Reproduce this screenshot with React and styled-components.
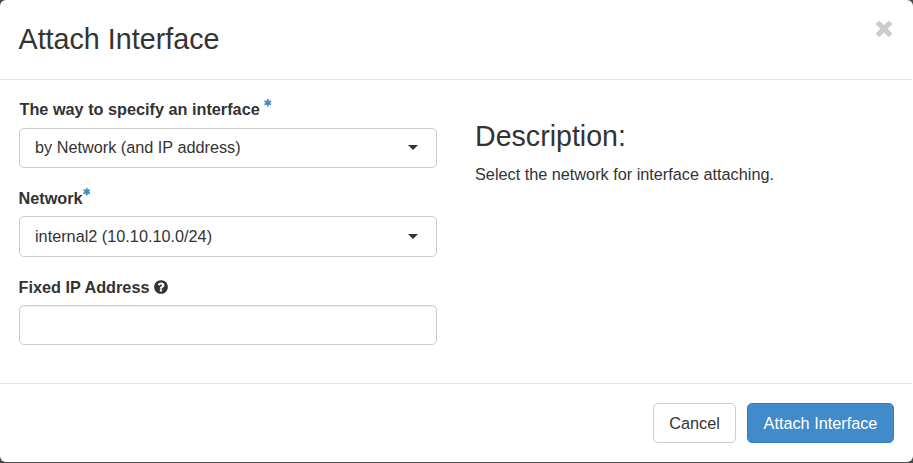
import React from "react";
import styled, { createGlobalStyle } from "styled-components";

const GlobalStyle = createGlobalStyle`
  * { box-sizing: border-box; }
  body {
    margin: 0;
    background: #4a4a4a;
    color: #333;
    font: 16.25px/22px "Liberation Sans", Arial, sans-serif;
    overflow: hidden;
  }
`;

const Backdrop = styled.div`
  height: 463px;
  padding: 0 0 1px;
  background: #4a4a4a;
`;

const Dialog = styled.section`
  display: flex;
  flex-direction: column;
  height: 462px;
  padding-right: 1px;
  background: #fff;
  border-radius: 6px;
`;

const Header = styled.header`
  display: flex;
  justify-content: space-between;
  height: 80px;
  padding: 18px 16px 0 18.5px;
  border-bottom: 1px solid #e5e5e5;
`;

const Title = styled.h3`
  margin: 0;
  font-size: 28.7px;
  font-weight: 400;
  line-height: 42px;
`;

const CloseButton = styled.button`
  width: 24px;
  height: 24px;
  margin-top: -2px;
  padding: 0;
  border: 0;
  background: none;
  color: #ccc;
`;

const Glyph = styled.svg`
  display: block;
  flex: none;
  width: ${(p) => p.$size}px;
  height: ${(p) => p.$size}px;
  fill: currentColor;
`;

const Body = styled.div`
  display: grid;
  grid-template-columns: 418px 1fr;
  column-gap: 38px;
  height: 303px;
  padding: 18px 18px 0 19px;
`;

const Form = styled.form`
  display: flex;
  flex-direction: column;
`;

const Field = styled.div`
  height: ${(p) => p.$height}px;
`;

const Label = styled.label`
  display: flex;
  align-items: center;
  gap: ${(p) => p.$gap || 0}px;
  height: 22px;
  margin: 0 0 ${(p) => p.$space}px ${(p) => p.$shift || 0}px;
  font-weight: 700;
  white-space: nowrap;
`;

const Required = styled.span`
  align-self: flex-start;
  padding-top: ${(p) => p.$drop}px;
  color: #428bca;
`;

const Select = styled.button`
  display: flex;
  align-items: center;
  justify-content: space-between;
  width: 100%;
  height: ${(p) => p.$height}px;
  padding: 0 18px 2px 15px;
  border: 1px solid #ccc;
  border-radius: 5px;
  background: #fff;
  color: #333;
  font: inherit;
  text-align: left;
`;

const Caret = styled.span`
  margin-top: ${(p) => p.$drop || 0}px;
  border: 5px solid transparent;
  border-top-color: #333;
  border-bottom: 0;
`;

const TextInput = styled.input`
  display: block;
  width: 100%;
  height: 40px;
  padding: 0 15px;
  border: 1px solid #ccc;
  border-radius: 5px;
  box-shadow: inset 0 1px 1px rgba(0, 0, 0, 0.075);
  font: inherit;
`;

const Description = styled.div`
  padding-top: 22px;
`;

const DescriptionTitle = styled.h3`
  margin: 0 0 11px;
  font-size: 28.6px;
  font-weight: 400;
  line-height: 32px;
`;

const Paragraph = styled.p`
  margin: 0;
`;

const Footer = styled.footer`
  display: flex;
  justify-content: flex-end;
  gap: 11px;
  height: 79px;
  padding: 19px 18px 0;
  border-top: 1px solid #e5e5e5;
`;

const Button = styled.button`
  width: ${(p) => p.$width}px;
  height: 40px;
  padding: 0;
  border: 1px solid ${(p) => (p.$primary ? "#357ebd" : "#ccc")};
  border-radius: 5px;
  background: ${(p) => (p.$primary ? "#428bca" : "#fff")};
  color: ${(p) => (p.$primary ? "#fff" : "#333")};
  font: inherit;
  white-space: nowrap;
`;

const paths = {
  times:
    "M1490 1322q0 40-28 68l-136 136q-28 28-68 28t-68-28l-294-294-294 294q-28 28-68 28t-68-28l-136-136q-28-28-28-68t28-68l294-294-294-294q-28-28-28-68t28-68l136-136q28-28 68-28t68 28l294 294 294-294q28-28 68-28t68 28l136 136q28 28 28 68t-28 68l-294 294 294 294q28 28 28 68z",
  question:
    "M1024 1376v-192q0-14-9-23t-23-9h-192q-14 0-23 9t-9 23v192q0 14 9 23t23 9h192q14 0 23-9t9-23zm256-672q0-88-55.5-163t-138.5-116-170-41q-243 0-371 213-15 24 8 42l132 100q7 6 19 6 16 0 25-12 53-68 86-92 34-24 86-24 48 0 85.5 26t37.5 59q0 38-20 61t-68 45q-63 28-115.5 86.5t-52.5 125.5v36q0 14 9 23t23 9h192q14 0 23-9t9-23q0-19 21.5-49.5t54.5-49.5q32-18 49-28.5t46-35 44.5-48 28-60.5 12.5-81zm384 192q0 209-103 385.5t-279.5 279.5-385.5 103-385.5-103-279.5-279.5-103-385.5 103-385.5 279.5-279.5 385.5-103 385.5 103 279.5 279.5 103 385.5z",
  asterisk:
    "M1546 1050q46 26 59.5 77.5t-12.5 97.5l-64 110q-26 46-77.5 59.5t-97.5-12.5l-266-153v307q0 52-38 90t-90 38h-128q-52 0-90-38t-38-90v-307l-266 153q-46 26-97.5 12.5t-77.5-59.5l-64-110q-26-46-12.5-97.5t59.5-77.5l266-154-266-154q-46-26-59.5-77.5t12.5-97.5l64-110q26-46 77.5-59.5t97.5 12.5l266 153v-307q0-52 38-90t90-38h128q52 0 90 38t38 90v307l266-153q46-26 97.5-12.5t77.5 59.5l64 110q26 46 12.5 97.5t-59.5 77.5l-266 154z",
};

function Icon({ name, size, viewBox = "0 0 1792 1792" }) {
  return (
    <Glyph $size={size} viewBox={viewBox} aria-hidden="true">
      <path d={paths[name]} />
    </Glyph>
  );
}

const Star = () => <Icon name="asterisk" size={7.5} viewBox="128 128 1536 1536" />;

export default function App() {
  return (
    <>
      <GlobalStyle />
      <Backdrop>
        <Dialog>
          <Header>
            <Title>Attach Interface</Title>
            <CloseButton aria-label="Close">
              <Icon name="times" size={24} />
            </CloseButton>
          </Header>
          <Body>
            <Form>
              <Field $height={89}>
                <Label $gap={4} $space={8} $shift={0.5}>
                  The way to specify an interface
                  <Required $drop={1}><Star /></Required>
                </Label>
                <Select type="button" $height={40}>
                  by Network (and IP address)
                  <Caret />
                </Select>
              </Field>
              <Field $height={89}>
                <Label $space={7} $shift={-0.5}>
                  Network
                  <Required $drop={1}><Star /></Required>
                </Label>
                <Select type="button" $height={41}>
                  internal2 (10.10.10.0/24)
                  <Caret $drop={2} />
                </Select>
              </Field>
              <Field $height={69}>
                <Label $gap={4} $space={7} $shift={-0.5}>
                  Fixed IP Address
                  <Icon name="question" size={16} />
                </Label>
                <TextInput type="text" aria-label="Fixed IP Address" />
              </Field>
            </Form>
            <Description>
              <DescriptionTitle>Description:</DescriptionTitle>
              <Paragraph>Select the network for interface attaching.</Paragraph>
            </Description>
          </Body>
          <Footer>
            <Button $width={83}>Cancel</Button>
            <Button $width={147} $primary>Attach Interface</Button>
          </Footer>
        </Dialog>
      </Backdrop>
    </>
  );
}
